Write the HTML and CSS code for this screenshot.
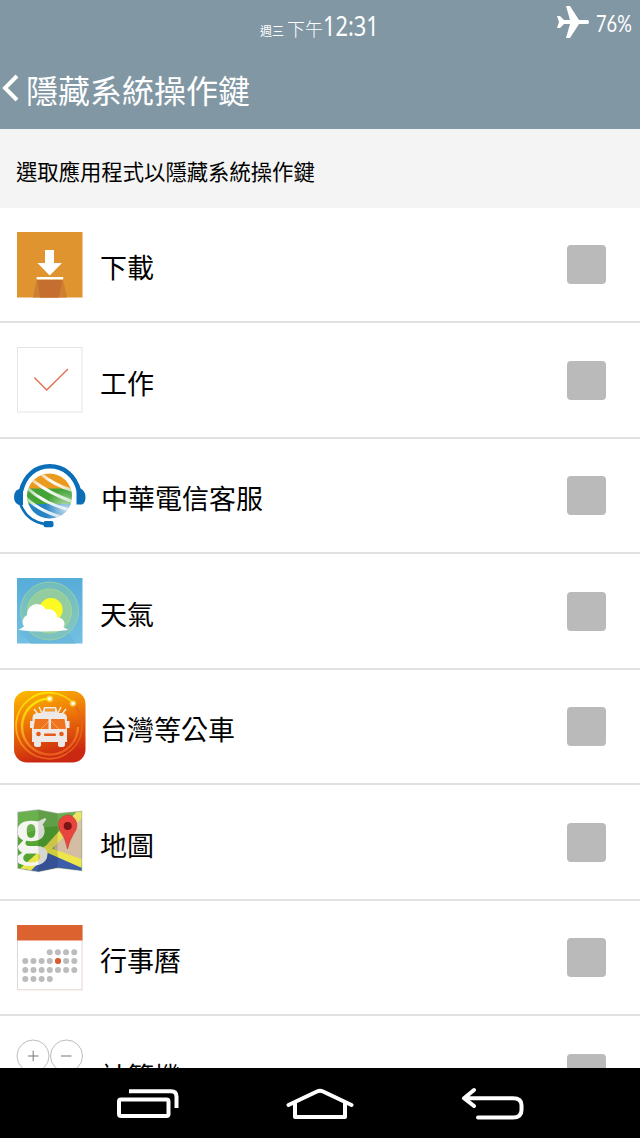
FILE: index.html
```html
<!doctype html>
<html lang="zh-Hant">

<head>
    <meta charset="utf-8">
    <title>隱藏系統操作鍵</title>
    <link rel="stylesheet" href="styles.css">
</head>

<body>
    <div class="screen">
        <header>
            <div class="status">
                <div class="clock"><span class="day">週三</span><span class="noon">下午</span><span class="time">12:31</span></div>
                <div class="power">
                    <svg class="plane" viewBox="0 0 34 34">
                        <path d="M10 1h4l9 14h9q2 2 0 4h-9l-9 14h-4l4-14H8l-4 4H1l2-6-2-6h3l4 4h6z" fill="#fff" />
                    </svg>
                    <span class="percent">76%</span>
                </div>
            </div>
            <div class="title">
                <svg class="back" viewBox="0 0 18 28">
                    <path d="M16 2L4 14L16 26" fill="none" stroke="#fff" stroke-width="4" />
                </svg>
                <h1>隱藏系統操作鍵</h1>
            </div>
        </header>
        <div class="note">選取應用程式以隱藏系統操作鍵</div>

        <div class="list">
            <div class="row">
                <svg class="icon" viewBox="0 0 72 72">
                    <rect x="3" y="3" width="65.5" height="65.5" fill="#df9430" />
                    <path d="M22.5 51h26.5l4 17.5H19z" fill="#cf7f30" />
                    <path d="M23.5 51h24.5l-3 17.5H26z" fill="#c46f30" />
                    <path d="M31 21h9v13h8L35.7 46.5L23.5 34H31z" fill="#fff" />
                    <rect x="22.7" y="48" width="26.5" height="2.4" fill="#fff" />
                </svg>
                <span class="name">下載</span>
                <span class="box"></span>
            </div>
            <div class="row">
                <svg class="icon" viewBox="0 0 72 72">
                    <rect x="3.5" y="3.5" width="64.5" height="64.5" fill="#fff" stroke="#e4e4e4" />
                    <path d="M20.3 33.5L32.7 46L54 25" fill="none" stroke="#e07050" stroke-width="1.4" />
                </svg>
                <span class="name">工作</span>
                <span class="box"></span>
            </div>
            <div class="row">
                <svg class="icon" viewBox="0 0 72 72">
                    <defs>
                        <clipPath id="globe"><circle cx="35.5" cy="36" r="22.5" /></clipPath>
                        <linearGradient id="band" x1="0" y1="0" x2="1" y2="0">
                            <stop offset="0" stop-color="#fff" stop-opacity="0.5" />
                            <stop offset="0.3" stop-color="#fff" />
                            <stop offset="1" stop-color="#fff" stop-opacity="0.6" />
                        </linearGradient>
                        <radialGradient id="shine" cx="0.85" cy="0.8" r="0.45">
                            <stop offset="0" stop-color="#fff" stop-opacity="0.7" />
                            <stop offset="1" stop-color="#fff" stop-opacity="0" />
                        </radialGradient>
                    </defs>
                    <g clip-path="url(#globe)">
                        <rect x="12" y="12" width="48" height="17" fill="#e99a1f" />
                        <rect x="12" y="28.5" width="48" height="16" fill="#43a336" />
                        <rect x="12" y="44" width="48" height="16" fill="#2582c4" />
                        <g fill="none" stroke="url(#band)" stroke-width="3">
                            <path d="M27 14Q40 25 60 31" />
                            <path d="M18 20Q36 34 60 42" />
                            <path d="M13 28Q32 45 60 51" />
                            <path d="M12 38Q28 53 52 58" />
                        </g>
                        <circle cx="35.5" cy="36" r="23" fill="url(#shine)" />
                    </g>
                    <g fill="none" stroke="#0a6eb8" stroke-width="4.5">
                        <path d="M7 31C11 15 22 6.3 35.7 6.3S61 15 65 31" />
                        <path d="M6 43C10 55 18 62 31 64" stroke-width="2.5" />
                    </g>
                    <path d="M9 29v16H5Q0 43 0 37T5 29z" fill="#0a6eb8" />
                    <path d="M62.5 28.5h4Q71.5 31 71.5 37T68 44.5h-5.5z" fill="#0a6eb8" />
                    <rect x="29.5" y="61" width="10" height="6.3" rx="2" fill="#0a6eb8" />
                </svg>
                <span class="name wide">中華電信客服</span>
                <span class="box"></span>
            </div>
            <div class="row">
                <svg class="icon" viewBox="0 0 72 72">
                    <defs>
                        <linearGradient id="sky" x1="0" y1="0" x2="0" y2="1">
                            <stop offset="0" stop-color="#56add8" />
                            <stop offset="1" stop-color="#73c0e3" />
                        </linearGradient>
                    </defs>
                    <rect x="3" y="3" width="65.5" height="65.5" fill="url(#sky)" />
                    <path d="M5 56L17 68.5H62L53 55z" fill="#69b7da" />
                    <circle cx="35.5" cy="36" r="29" fill="#a4d68c" fill-opacity="0.35" stroke="#9ed4a2" stroke-width="0.8" />
                    <circle cx="35.5" cy="36" r="22" fill="#b0d982" fill-opacity="0.5" stroke="#acdb8c" stroke-width="0.8" />
                    <circle cx="37" cy="34.7" r="11.7" fill="#fdf923" />
                    <g fill="#fff">
                        <circle cx="23" cy="39" r="10" />
                        <circle cx="16" cy="47" r="7.5" />
                        <circle cx="34.5" cy="43" r="9" />
                        <circle cx="44" cy="49" r="6.5" />
                        <path d="M4.5 55Q12 51 15 45H42Q47 52 54.5 55Q29 58 4.5 55z" />
                    </g>
                </svg>
                <span class="name">天氣</span>
                <span class="box"></span>
            </div>
            <div class="row">
                <svg class="icon" viewBox="0 0 72 72">
                    <defs>
                        <linearGradient id="fire" x1="0" y1="0" x2="0.25" y2="1">
                            <stop offset="0" stop-color="#fcbd02" />
                            <stop offset="0.5" stop-color="#ec7208" />
                            <stop offset="1" stop-color="#cb2811" />
                        </linearGradient>
                        <linearGradient id="trail" x1="0" y1="0" x2="0.3" y2="1">
                            <stop offset="0" stop-color="#fff200" />
                            <stop offset="0.5" stop-color="#fbb41c" />
                            <stop offset="1" stop-color="#e75d1c" />
                        </linearGradient>
                    </defs>
                    <rect width="71.5" height="71.5" rx="13" fill="url(#fire)" />
                    <g fill="none" stroke="url(#trail)" stroke-width="2.4">
                        <path d="M35.7 7.6A28 28 0 1 0 64 36" />
                        <path d="M59.5 12.5A33 33 0 1 0 52 63" stroke-width="1.8" />
                        <path d="M59.5 12.5A33 33 0 0 1 52 63" stroke="#e7661a" stroke-width="1.3" />
                    </g>
                    <circle cx="35.7" cy="7.8" r="3.3" fill="#fff05a" fill-opacity="0.7" />
                    <circle cx="35.7" cy="7.8" r="1.7" fill="#fff" />
                    <circle cx="59" cy="12.5" r="3.3" fill="#ffdf4a" fill-opacity="0.7" />
                    <circle cx="59" cy="12.5" r="1.7" fill="#fff" />
                    <path d="M20 18l4 5M25 16l3 6M52 18l-4 5M47 16l-3 6" stroke="#fce8cc" stroke-width="1.6" />
                    <path d="M30 16h12l2 6h3q6 0 6 5v3h2.5v7H53v14h-2v3q0 2-4 2-3 0-3-2v-3H27v3q0 2-3 2-4 0-4-2v-3h-2V37h-2v-7h2.5v-3q0-5 6-5H28z" fill="#eee9e6" />
                    <path d="M21 28h13.5v10H19.5zM37 28h13.5L52 38H37z" fill="#ee751d" />
                    <path d="M31 17.5h10v3H31z" fill="#f29a31" />
                    <path d="M27 38l8-8M45 38l-8-8" stroke="#f7bd82" stroke-width="0.7" />
                    <circle cx="24.5" cy="43" r="2.3" fill="#e65b18" />
                    <circle cx="47.5" cy="43" r="2.3" fill="#e65b18" />
                    <rect x="30" y="42.5" width="12" height="2.5" rx="1" fill="#e65b18" />
                </svg>
                <span class="name">台灣等公車</span>
                <span class="box"></span>
            </div>
            <div class="row">
                <svg class="icon" viewBox="0 0 72 72">
                    <defs>
                        <clipPath id="fold"><path d="M4 6.5L24.3 4L43.7 7.7L67.5 5.5V64.5L43.7 61.5L24.3 65.5L4 62z" /></clipPath>
                    </defs>
                    <path d="M4 6.5L24.3 4L43.7 7.7L67.5 5.5V64.5L43.7 61.5L24.3 65.5L4 62z" fill="#999" stroke="#bbb" stroke-width="1.5" />
                    <g clip-path="url(#fold)">
                        <rect width="72" height="72" fill="#54a534" />
                        <path d="M44 28L72 5v55L40 43z" fill="#d4bda3" />
                        <path d="M0 74L27 44L72 62v10H0z" fill="#3d5ca9" />
                        <path d="M28 44L66 2l6 6L37 44z" fill="#e9df53" />
                        <path d="M0 68L31 40L70 54v9L34 47L10 72z" fill="#ede64b" />
                        <text class="letter" x="1" y="46">g</text>
                        <path d="M24.3 0L43.7 4V65L24.3 72z" fill="#000" fill-opacity="0.12" />
                        <path d="M0 0H72V25Q30 12 0 35z" fill="#fff" fill-opacity="0.13" />
                    </g>
                    <path d="M53.5 43Q51.5 32 46 25Q41.5 15 49 10.5T61.5 14Q65 20 60 27Q55.5 34 53.5 43z" fill="#e8453f" stroke="#c7352f" stroke-width="0.6" />
                    <circle cx="53.7" cy="20" r="4" fill="#7c1515" />
                </svg>
                <span class="name">地圖</span>
                <span class="box"></span>
            </div>
            <div class="row">
                <svg class="icon" viewBox="0 0 72 72">
                    <rect x="3.5" y="3.5" width="64.5" height="64.3" fill="#fff" stroke="#e3d5d1" />
                    <rect x="3" y="3" width="65.5" height="15.5" fill="#dc622f" />
                    <g fill="none" stroke="#bcbcbc" stroke-width="6" stroke-linecap="round" stroke-dasharray="0 8.17">
                        <path d="M35.7 30.2H60.4" />
                        <path d="M11.3 39H60.4" />
                        <path d="M11.3 48H60.4" />
                        <path d="M11.3 57H36" />
                    </g>
                    <circle cx="44" cy="39" r="3" fill="#dc5a2c" />
                </svg>
                <span class="name">行事曆</span>
                <span class="box"></span>
            </div>
            <div class="row">
                <svg class="icon" viewBox="0 0 72 72">
                    <g fill="#fff" stroke="#bdbdbd">
                        <circle cx="19" cy="19" r="16" />
                        <circle cx="52.5" cy="19" r="16" />
                        <circle cx="19" cy="52.5" r="16" />
                        <circle cx="52.5" cy="52.5" r="16" />
                    </g>
                    <path d="M14 19h10.5M19.2 13.7v10.5M47 19h10.5" stroke="#777" />
                </svg>
                <span class="name">計算機</span>
                <span class="box"></span>
            </div>
        </div>

        <nav>
            <svg class="recent" viewBox="0 0 62 30">
                <rect x="2" y="10.5" width="49.5" height="16.5" rx="2" />
                <path d="M12 2.2H54Q59.5 2.2 59.5 7.5V19" stroke-linecap="butt" />
            </svg>
            <svg class="home" viewBox="0 0 68 32">
                <path d="M2.5 17L31 3.5Q34 2 37 3.5L65.5 17M9 15.5V29H59V15.5" />
            </svg>
            <svg class="return" viewBox="0 0 64 34">
                <path d="M13 3L3 11.2L13 19M4 11.2H52Q60.5 11.2 60.5 18V23Q60.5 30.5 52 30.5H17" />
            </svg>
        </nav>
    </div>
</body>

</html>
```
FILE: styles.css
```css
body {
    margin: 0;
    background-color: #fff;
    color: #000;
    font-family: "Noto Sans CJK TC", sans-serif;
    overflow: hidden;
}

.screen {
    display: flex;
    flex-direction: column;
    height: 1138px;
}

header {
    flex: none;
    height: 129px;
    background-color: #8197a4;
    color: #fff;
}

.status {
    display: grid;
    grid-template-columns: 260px 1fr auto;
    height: 50px;
    padding-right: 8px;
}

.clock {
    grid-column: 2;
    display: flex;
    align-items: baseline;
    line-height: 50px;
}

.day {
    width: 27px;
    font-size: 12px;
}

.noon {
    width: 36px;
    font-size: 18px;
    font-weight: 300;
}

.time {
    font-family: "Noto Sans", sans-serif;
    font-size: 28px;
    transform: scaleX(0.78);
    transform-origin: left;
}

.power {
    display: flex;
    width: 76px;
}

.plane {
    flex: none;
    width: 34px;
    height: 34px;
    margin-top: 5px;
}

.percent {
    margin-left: 6px;
    font-family: Lato, sans-serif;
    font-size: 22.5px;
    line-height: 47px;
    transform: scaleX(0.81);
    transform-origin: left;
}

.title {
    display: flex;
    align-items: center;
    height: 79px;
}

.back {
    width: 18px;
    height: 28px;
    margin: 0 7px 4px 1px;
}

h1 {
    margin: 0;
    font-size: 32px;
    font-weight: 400;
    line-height: 81px;
}

.note {
    flex: none;
    height: 79px;
    padding-left: 16px;
    background-color: #f4f4f4;
    font-size: 21.35px;
    line-height: 83px;
}

.list {
    flex: 1;
    min-height: 0;
    overflow: hidden;
}

.row {
    display: flex;
    align-items: center;
    box-sizing: border-box;
    height: 115.48px;
    padding: 0 34px 0 14px;
    border-bottom: 2px solid #e0e2e2;
}

.icon {
    flex: none;
    width: 72px;
    height: 72px;
}

.name {
    flex: 1;
    padding: 5px 0 0 14px;
    font-size: 27px;
    line-height: 40px;
}

.wide {
    padding-left: 15px;
}

.box {
    width: 39px;
    height: 39px;
    border-radius: 4px;
    background-color: #bababa;
}

.letter {
    font-family: "Liberation Serif", serif;
    font-size: 66px;
    font-weight: bold;
    fill: #f4f5f1;
}

nav {
    flex: none;
    display: flex;
    justify-content: space-between;
    align-items: center;
    box-sizing: border-box;
    height: 70px;
    padding: 2px 115px 0 117px;
    background-color: #000;
}

nav svg {
    fill: none;
    stroke: #fff;
    stroke-width: 4;
    stroke-linecap: round;
    stroke-linejoin: round;
}

.recent {
    width: 62px;
    height: 30px;
}

.home {
    width: 68px;
    height: 32px;
}

.return {
    width: 64px;
    height: 34px;
}
```
